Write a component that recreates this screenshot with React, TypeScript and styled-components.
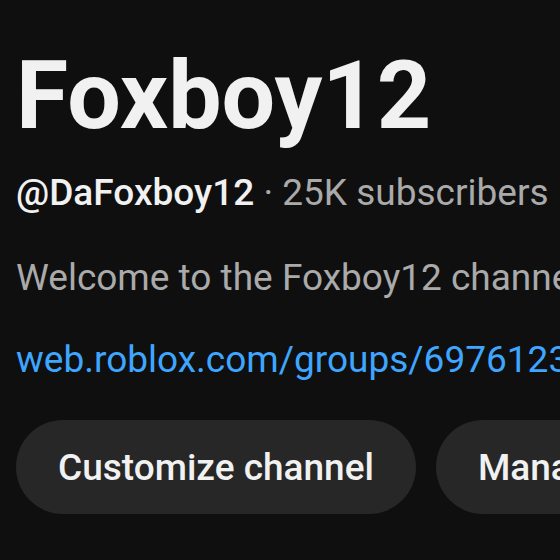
import React from "react";
import styled, { createGlobalStyle } from "styled-components";

const GlobalStyle = createGlobalStyle`
  html, body {
    margin: 0;
    padding: 0;
    background: #0f0f0f;
    overflow: hidden;
  }
  body {
    font-family: Roboto, "Liberation Sans", Arial, sans-serif;
  }
`;

const Page = styled.div`
  width: 560px;
  height: 560px;
  overflow: hidden;
  background: #0f0f0f;
  box-sizing: border-box;
  padding: 40px 0 0 16px;
  display: flex;
  flex-direction: column;
  align-items: flex-start;
`;

const Title = styled.h1`
  margin: 0;
  font-size: 95px;
  line-height: 112px;
  font-weight: 700;
  color: #f1f1f1;
  white-space: nowrap;
`;

const MetaRow = styled.div`
  margin-top: 15px;
  font-size: 37px;
  line-height: 52px;
  color: #aaaaaa;
  white-space: nowrap;
`;

const Handle = styled.span`
  color: #f1f1f1;
  font-weight: 500;
`;

const Description = styled.div`
  margin-top: 33px;
  font-size: 37px;
  line-height: 52px;
  color: #aaaaaa;
  white-space: nowrap;
`;

const Link = styled.a`
  margin-top: 30px;
  font-size: 37px;
  line-height: 52px;
  color: #3ea6ff;
  text-decoration: none;
  white-space: nowrap;
`;

const Actions = styled.div`
  margin-top: 34px;
  display: flex;
  gap: 20px;
  flex-wrap: nowrap;
`;

const Pill = styled.button`
  flex: none;
  height: 94px;
  padding: 0 42px;
  border: none;
  border-radius: 47px;
  background: #272727;
  color: #f1f1f1;
  font-family: Roboto, "Liberation Sans", Arial, sans-serif;
  font-size: 37px;
  font-weight: 500;
  white-space: nowrap;
`;

export default function App() {
  return (
    <>
      <GlobalStyle />
      <Page>
        <Title>Foxboy12</Title>
        <MetaRow>
          <Handle>@DaFoxboy12</Handle> · 25K subscribers
        </MetaRow>
        <Description>Welcome to the Foxboy12 channel!</Description>
        <Link href="#">web.roblox.com/groups/6976123</Link>
        <Actions>
          <Pill>Customize channel</Pill>
          <Pill>Manage videos</Pill>
        </Actions>
      </Page>
    </>
  );
}
